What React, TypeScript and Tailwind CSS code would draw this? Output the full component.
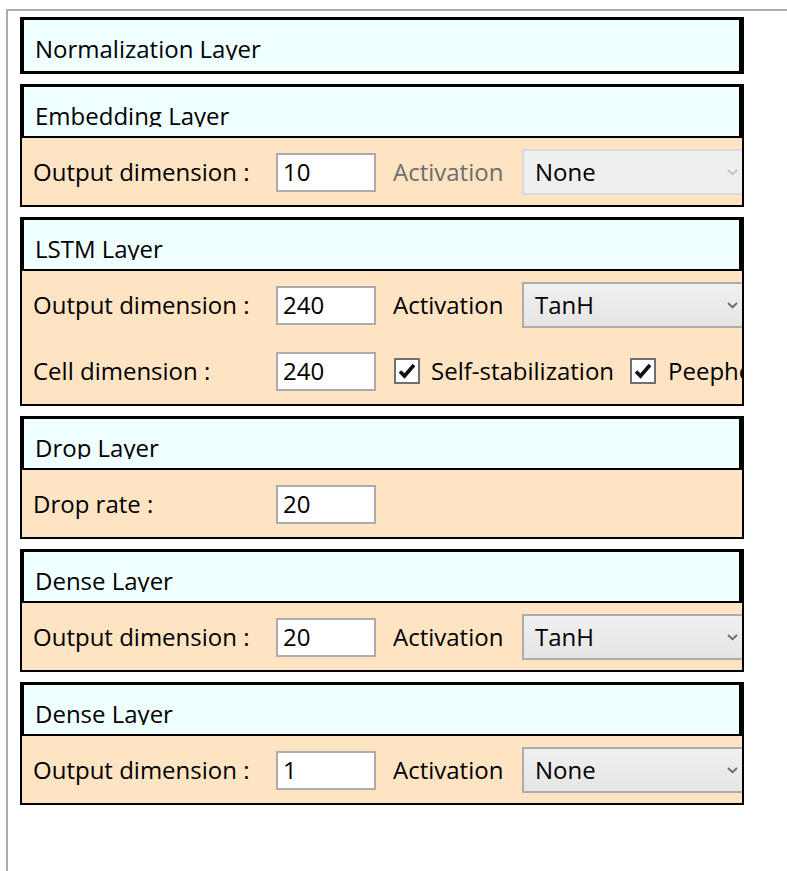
type Row =
  | { kind: "dim"; label: string; value: string; activation?: string; disabled?: boolean }
  | { kind: "cell"; label: string; value: string };

type Layer = { title: string; rows: Row[] };

const layers: Layer[] = [
  { title: "Normalization Layer", rows: [] },
  {
    title: "Embedding Layer",
    rows: [{ kind: "dim", label: "Output dimension :", value: "10", activation: "None", disabled: true }],
  },
  {
    title: "LSTM Layer",
    rows: [
      { kind: "dim", label: "Output dimension :", value: "240", activation: "TanH" },
      { kind: "cell", label: "Cell dimension :", value: "240" },
    ],
  },
  { title: "Drop Layer", rows: [{ kind: "dim", label: "Drop rate :", value: "20" }] },
  {
    title: "Dense Layer",
    rows: [{ kind: "dim", label: "Output dimension :", value: "20", activation: "TanH" }],
  },
  {
    title: "Dense Layer",
    rows: [{ kind: "dim", label: "Output dimension :", value: "1", activation: "None" }],
  },
];

function Chevron({ light }: { light?: boolean }) {
  return (
    <svg width="11" height="8" viewBox="0 0 11 8" className="shrink-0">
      <path d="M1 2 L5.5 6.2 L10 2" fill="none" stroke={light ? "#c4c4c4" : "#6a6a6a"} strokeWidth="1.8" />
    </svg>
  );
}

function Check() {
  return (
    <div className="w-[26px] h-[26px] border-2 border-[#6f6f6f] bg-white flex items-center justify-center shrink-0">
      <svg width="20" height="18" viewBox="0 0 20 18">
        <path d="M3 9.5 L7.5 14 L17 3" fill="none" stroke="#111" strokeWidth="3.6" strokeLinejoin="miter" />
      </svg>
    </div>
  );
}

function TextBox({ value }: { value: string }) {
  return (
    <div className="w-[100px] h-[39px] border-2 border-[#acacac] bg-white pl-[5px] flex items-center shrink-0">
      {value}
    </div>
  );
}

function LayerRow({ row }: { row: Row }) {
  return (
    <div className="h-[66px] flex items-center pl-[11px] whitespace-nowrap">
      <span className="w-[243px] shrink-0">{row.label}</span>
      <TextBox value={row.value} />
      {row.kind === "dim" && row.activation && (
        <>
          <span className={`ml-[17px] w-[129px] shrink-0 ${row.disabled ? "text-[#6d6d6d]" : "text-black"}`}>
            Activation
          </span>
          <div
            className={`w-[226px] h-[46px] border-2 shrink-0 flex items-center pl-[11px] pr-[8px] ${
              row.disabled
                ? "border-[#d9d9d9] bg-[#efefef]"
                : "border-[#acacac] bg-gradient-to-b from-[#f0f0f0] to-[#e5e5e5]"
            }`}
          >
            <span className="flex-1">{row.activation}</span>
            <Chevron light={row.disabled} />
          </div>
        </>
      )}
      {row.kind === "cell" && (
        <>
          <div className="ml-[18px]">
            <Check />
          </div>
          <span className="ml-[11px] w-[199px] shrink-0">Self-stabilization</span>
          <Check />
          <span className="ml-[12px]">Peephole</span>
        </>
      )}
    </div>
  );
}

function LayerCard({ layer }: { layer: Layer }) {
  const hasBody = layer.rows.length > 0;
  return (
    <div className="w-[724px]">
      <div
        className={`bg-[#f0ffff] border-black border-t-[3px] border-l-[4px] border-r-[5px] ${
          hasBody ? "h-[54px] border-b-2" : "h-[57px] border-b-[3px]"
        }`}
      >
        <div className="h-[40px] overflow-hidden pl-[11px] pt-[17px] leading-[24px]">{layer.title}</div>
      </div>
      {hasBody && (
        <div className="bg-[#ffe4c4] border-black border-x-2 border-b-2 pt-[1px] overflow-hidden">
          {layer.rows.map((r, i) => (
            <LayerRow key={i} row={r} />
          ))}
        </div>
      )}
    </div>
  );
}

export default function App() {
  return (
    <div
      className="min-h-[871px] pt-[9px] pl-[6px] bg-white text-black text-[24px]"
      style={{ fontFamily: '"Open Sans", "Noto Sans", sans-serif' }}
    >
      <div className="min-h-[862px] border-t-2 border-l-2 border-[#acacac] pt-[6px] pl-[12px] flex flex-col gap-[10px]">
        {layers.map((l, i) => (
          <LayerCard key={i} layer={l} />
        ))}
      </div>
    </div>
  );
}
